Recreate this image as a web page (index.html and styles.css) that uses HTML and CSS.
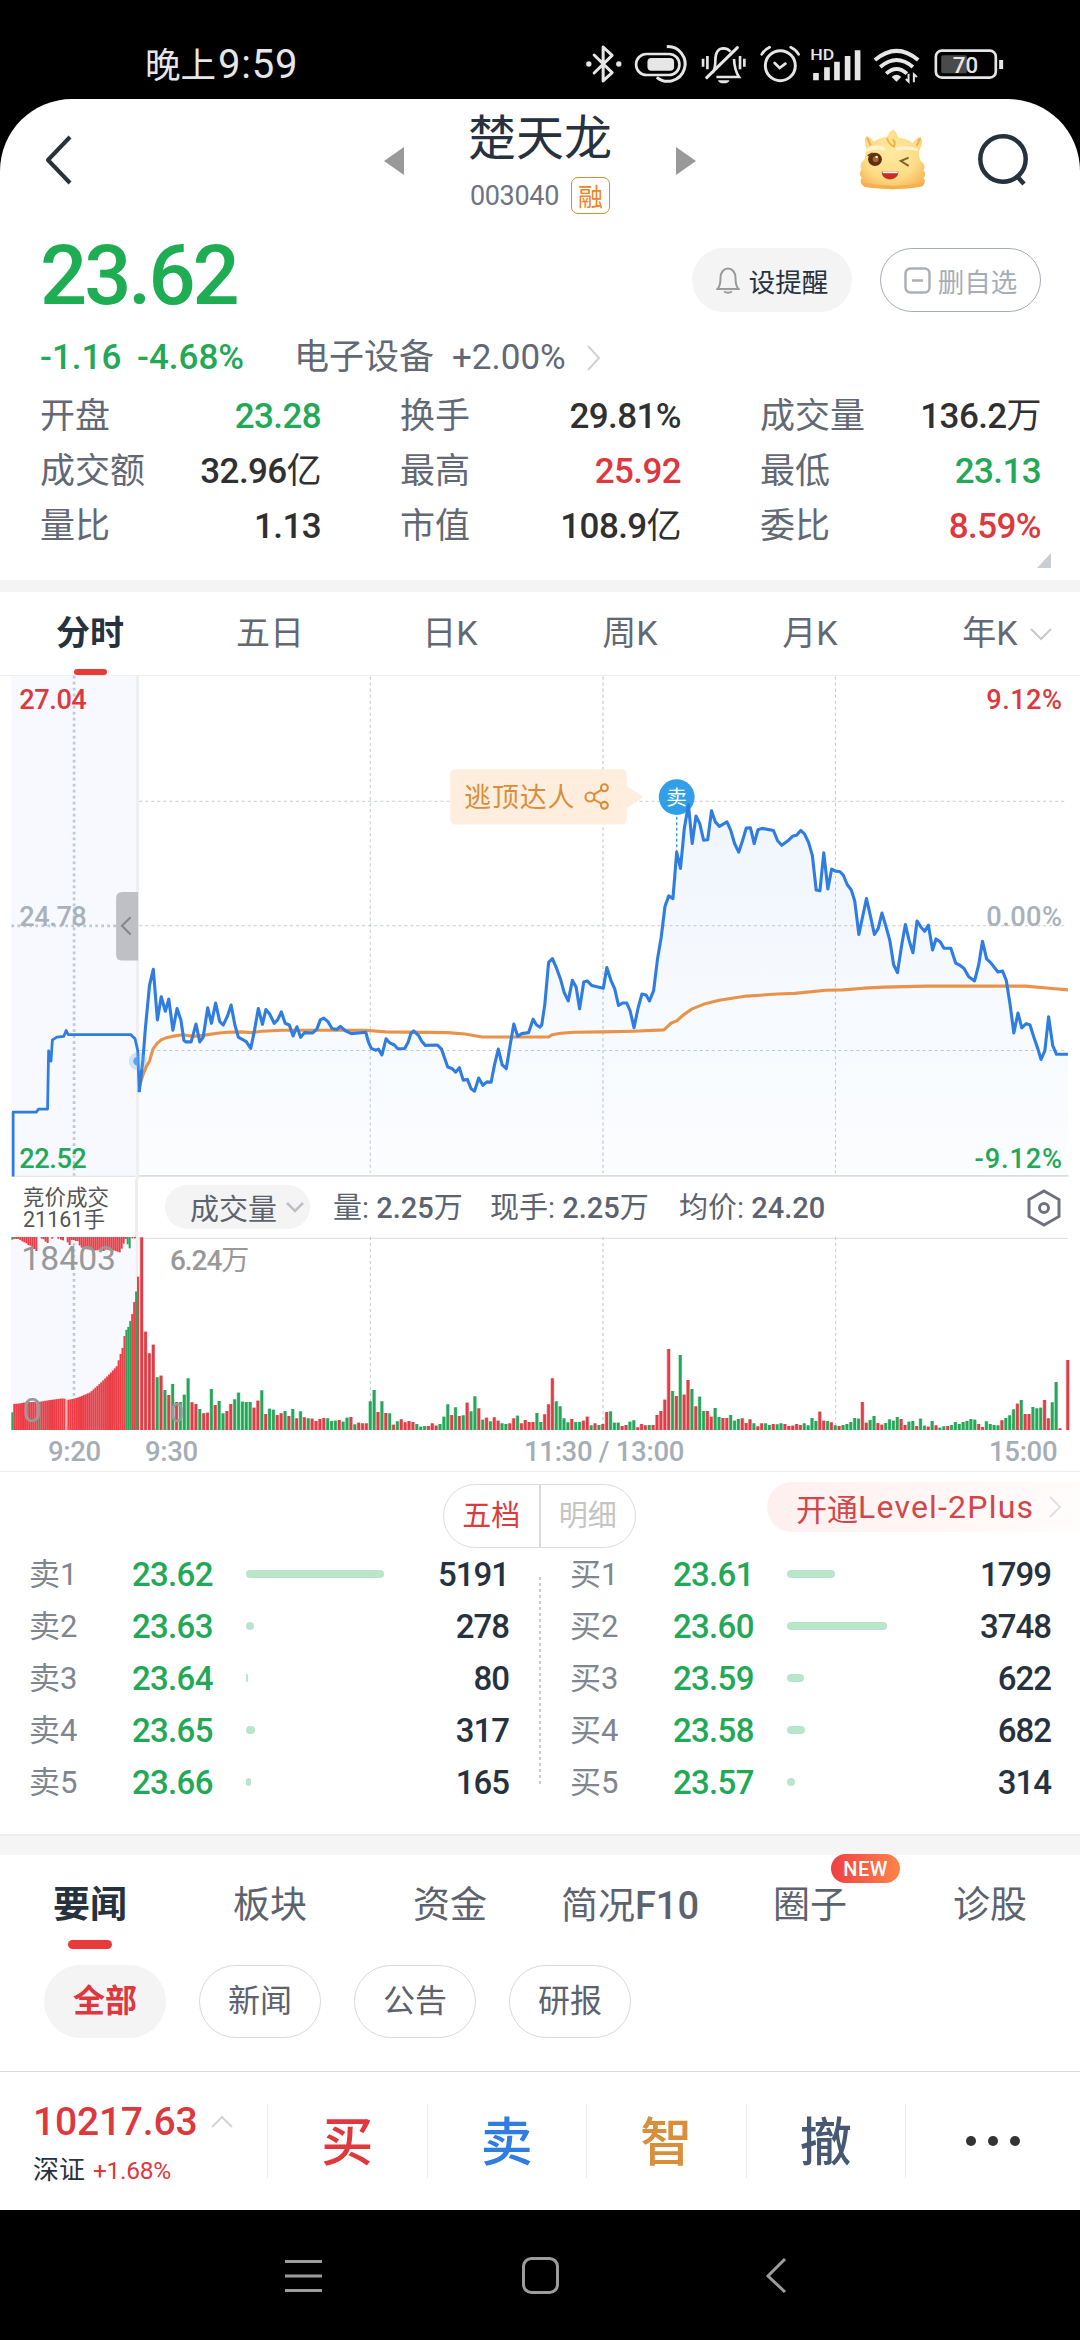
FILE: index.html
```html
<!DOCTYPE html>
<html lang="zh-CN">
<head>
<meta charset="utf-8">
<title>楚天龙 003040</title>
<link rel="stylesheet" href="styles.css">
</head>
<body>
<div class="status">
  <span class="clock">晚上<b>9:59</b></span>
  <svg class="status-icons" viewBox="70 65 1270 130" fill="none" stroke="#e6e6e6" stroke-width="8">
    <path d="M103 104L157 157L130 182V80L157 105L103 158" stroke-linejoin="round" stroke-linecap="round" stroke-width="9"/>
    <circle cx="87" cy="131" r="8" fill="#e6e6e6" stroke="none"/><circle cx="177" cy="131" r="8" fill="#e6e6e6" stroke="none"/>
    <rect x="229" y="101" width="130" height="63" rx="31"/><rect x="263" y="113" width="80" height="38" rx="12" fill="#e6e6e6" stroke="none"/>
    <path d="M321 79A52 52 0 1 1 291 171" stroke-width="9"/>
    <path d="M459 157C466 147 467 135 467 118C467 95 478 84 491 84C500 84 508 88 512 94M523 116C524 145 530 158 538 170H470"/>
    <path d="M441 172L533 82" stroke-width="9" stroke-linecap="round"/><path d="M475 180h34a17 9 0 0 1-34 0z" fill="#e6e6e6" stroke="none"/>
    <path d="M430 115v24M443 107v40M541 107v40M554 115v24"/>
    <circle cx="662" cy="136" r="45" stroke-width="9"/><path d="M645 128l15 15l17-13M606 102q8-14 24-21M717 102q-8-14-24-21" stroke-linecap="round"/>
    <text class="hd" x="752" y="119" textLength="72" lengthAdjust="spacingAndGlyphs">HD</text>
    <path d="M769 158v22M802 141v39M832 124v56M864 107v73M894 90v90" stroke-width="17"/>
    <path d="M946 119Q1011 64 1076 119M962 140Q1011 98 1060 140M980 160Q1011 132 1042 160" stroke-width="12"/>
    <path d="M1011 184l-15-14q15-13 29 0z" fill="#e6e6e6" stroke="none"/><path d="M1047 160v24l-8-8M1063 186v-24l9 8" stroke-width="6"/>
    <rect x="1129" y="91" width="180" height="81" rx="18"/><rect x="1145" y="105" width="77" height="54" rx="5" fill="#4a4a4a" stroke="none"/>
    <path d="M1325 119v27" stroke-width="12"/>
    <text class="batt" x="1180" y="158" textLength="76" lengthAdjust="spacingAndGlyphs">70</text>
  </svg>
</div>
<main class="app">
  <header class="head">
    <svg class="back" viewBox="0 0 28 50"><path d="M25 2L3 25L25 48"/></svg>
    <svg class="arrow left" viewBox="0 0 20 28"><path d="M20 0V28L0 14z"/></svg>
    <div class="title">
      <h1>楚天龙</h1>
      <p><span class="code">003040</span><b>融</b></p>
    </div>
    <svg class="arrow right" viewBox="0 0 20 28"><path d="M0 0V28L20 14z"/></svg>
    <svg class="dragon" viewBox="898 326 202 188">
      <defs>
        <radialGradient id="face" cx=".48" cy=".4" r=".65"><stop offset="0" stop-color="#ffeaa0"/><stop offset=".65" stop-color="#fddc86"/><stop offset="1" stop-color="#f6b75c"/></radialGradient>
      </defs>
      <path d="M919 385Q911 350 922 347Q936 354 942 364Q960 352 982 350Q990 330 1002 328Q1014 338 1017 352Q1045 355 1060 369Q1070 352 1084 350Q1094 368 1080 392Q1077 405 1084 422Q1102 436 1093 450Q1103 463 1093 474Q1103 486 1090 499Q1000 519 912 499Q896 489 906 473Q894 462 905 448Q897 434 914 418Q918 402 919 385Z" fill="url(#face)"/>
      <path d="M907 488Q1000 508 1095 488Q1095 499 1078 503Q1000 514 920 503Q906 499 907 488z" fill="#f9ad4b"/>
      <path d="M918 390Q928 370 970 378Q980 385 973 392Q945 383 921 396zM1012 383Q1044 372 1077 386L1075 393Q1044 386 1014 392Q1008 390 1012 383z" fill="#fff3cf"/>
      <path d="M982 354Q990 375 1004 379Q1009 362 999 358M922 352l11 24M1082 355l-10 22" fill="none" stroke="#efb04c" stroke-width="6"/>
      <ellipse cx="946" cy="418" rx="21" ry="20" fill="#5e2e13"/><circle cx="948" cy="418" r="9" fill="#a8642d"/><circle cx="951" cy="411" r="4" fill="#fff0c0"/>
      <path d="M924 407l15-8" stroke="#6b3b14" stroke-width="5"/>
      <path d="M1048 413L1024 423L1048 438" fill="none" stroke="#80642b" stroke-width="6"/>
      <path d="M966 455H1017Q1016 478 991 479Q967 478 966 455z" fill="#cf2c20"/><path d="M969 455h46v5h-46z" fill="#fff"/>
      <ellipse cx="990" cy="437" rx="12" ry="6" fill="#ffe27a"/>
    </svg>
    <svg class="search" viewBox="0 0 50 54"><circle cx="25" cy="25" r="22.7"/><path d="M38 41L46 50"/></svg>
  </header>

  <section class="quote">
    <div class="price-row">
      <strong>23.62</strong>
      <button class="pill solid"><svg viewBox="0 0 24 27"><path d="M1.5 22H22.5Q19.500 19 19.500 11C19.500 5 16 1.500 12 1.500S4.500 5 4.500 11Q4.500 19 1.500 22zM8 24.500Q12 27 16 24.500"/></svg>设提醒</button>
      <button class="pill line"><svg viewBox="0 0 27 27"><rect x="1.500" y="1.500" width="24" height="24" rx="5"/><path d="M8 13.500h11"/></svg>删自选</button>
    </div>
    <div class="change-row">
      <span class="g c1">-1.16</span><span class="g c2">-4.68%</span><span class="c3">电子设备</span><span class="c4">+2.00%</span>
      <svg viewBox="0 0 14 26"><path d="M1 1L12 13L1 25"/></svg>
    </div>
    <dl class="stats">
      <div><dt>开盘</dt><dd class="g">23.28</dd></div><div><dt>换手</dt><dd>29.81%</dd></div><div><dt>成交量</dt><dd>136.2<i>万</i></dd></div>
      <div><dt>成交额</dt><dd>32.96<i>亿</i></dd></div><div><dt>最高</dt><dd class="r">25.92</dd></div><div><dt>最低</dt><dd class="g">23.13</dd></div>
      <div><dt>量比</dt><dd>1.13</dd></div><div><dt>市值</dt><dd>108.9<i>亿</i></dd></div><div><dt>委比</dt><dd class="r">8.59%</dd></div>
    </dl>
    <svg class="corner" viewBox="0 0 14 15"><path d="M14 0V15H0z"/></svg>
  </section>

  <nav class="periods">
    <a class="on">分时</a><a>五日</a><a>日K</a><a>周K</a><a>月K</a>
    <a>年K<svg viewBox="0 0 22 14"><path d="M1 2L11 12L21 2"/></svg></a>
  </nav>

  <svg class="price-chart" viewBox="0 43.56 3136 1463.600">
    <defs>
      <linearGradient id="area" x1="0" y1="0" x2="0" y2="1"><stop offset="0" stop-color="#2f7de1" stop-opacity=".07"/><stop offset="1" stop-color="#2f7de1" stop-opacity=".018"/></linearGradient>
    </defs>
    <rect x="33" y="46" width="366" height="1452" fill="#f7f9fe"/>
    <g fill="none" stroke="#c3ccd2" stroke-width="3" stroke-dasharray="9 8.500">
      <path d="M1075 48V1490M2426 48V1490M404 410H3095M404 772H3095M404 1134H3095"/>
      <path d="M1751 48V1490" stroke="#dbe0e8" stroke-width="6"/>
    </g>
    <path d="M215 46V1498M33 772H400" fill="none" stroke="#bccadb" stroke-width="8" stroke-dasharray="8 9.400"/>
    <path id="areaPath" fill="url(#area)"/>
    <path d="M33 1499H400" stroke="#dcdee1" stroke-width="3"/><path d="M404 1498H3103" stroke="#dadcdf" stroke-width="5"/>
    <path d="M399 46V1507" stroke="#efefef" stroke-width="9"/>
    <path d="M401 674H355Q337 674 337 692V855Q337 873 355 873H401z" fill="#bfc0c5"/>
    <path d="M379 747L354 772L379 797" fill="none" stroke="#85868a" stroke-width="6"/>
    <g class="axis">
      <text class="r" x="56" y="142" textLength="196">27.04</text><text x="56" y="772" textLength="196">24.78</text><text class="g" x="56" y="1475" textLength="196">22.52</text>
      <text class="r" x="2864" y="142" textLength="220">9.12%</text><text x="2864" y="772" textLength="220">0.00%</text><text class="g" x="2830" y="1475" textLength="254">-9.12%</text>
    </g>
    <path d="M1965 455V560" stroke="#309fe8" stroke-width="4" stroke-dasharray="9 7"/>
    <g fill="none" stroke-width="9" stroke-linejoin="round">
      <path id="avgLine" stroke="#e9924a"/>
      <path id="auctionLine" stroke="#2f7de1" stroke-width="8"/>
      <circle cx="1965" cy="398" r="52" fill="#309fe8" stroke="none"/>
      <path id="priceLine" stroke="#2f7de1"/>
    </g>
    <circle cx="400" cy="1165" r="26" fill="#6fb0ee" opacity=".3"/><path d="M400 1152a13 13 0 0 0 0 26z" fill="#5ba2e6"/>
    <path d="M1323 317H1804Q1820 317 1820 333V366L1868 398L1820 430V462Q1820 478 1804 478H1323Q1307 478 1307 462V333Q1307 317 1323 317z" fill="#ffeedd"/>
    <text class="tag" x="1348" y="427" textLength="320">逃顶达人</text>
    <g fill="none" stroke="#d98e3c" stroke-width="6"><circle cx="1713" cy="398" r="13"/><circle cx="1755" cy="371" r="10"/><circle cx="1755" cy="422" r="10"/><path d="M1724 391L1746 377M1724 405L1746 417"/></g>
    <text class="sell" x="1965" y="420" text-anchor="middle">卖</text>
  </svg>

  <div class="info">
    <div class="auction">竞价成交<br>21161手</div>
    <button>成交量<svg viewBox="0 0 18 11"><path d="M1 1L9 9L17 1"/></svg></button>
    <span class="i1">量: <b>2.25</b>万</span><span class="i2">现手: <b>2.25</b>万</span><span class="i3">均价: <b>24.20</b></span>
    <svg class="gear" viewBox="0 0 34 38"><path d="M17 2L32 10.500V27.500L17 36L2 27.500V10.500z"/><circle cx="17" cy="19" r="4.500"/></svg>
  </div>

  <svg class="volume" viewBox="0 0 3240 579">
    <rect x="33" y="0" width="378" height="579" fill="#f7f9fe"/>
    <path d="M411 4H3204" stroke="#d9dbdd" stroke-width="3"/>
    <path d="M1111 0V579M2507 0V579" stroke="#c3ccd2" stroke-width="3" stroke-dasharray="9 9"/>
    <path d="M1809 0V579" stroke="#dbe0e8" stroke-width="6" stroke-dasharray="9 9"/>
    <path d="M222 0V579" stroke="#bccadb" stroke-width="8" stroke-dasharray="8 10"/>
    <path d="M411 0V579" stroke="#eeeeee" stroke-width="8"/>
    <g id="bars"></g>
    <g fill="#999">
      <text x="64" y="99" font-size="102" textLength="284" lengthAdjust="spacingAndGlyphs">18403</text>
      <text x="68" y="554" font-size="102">0</text>
      <text x="510" y="99" font-size="84" textLength="238"><tspan font-weight="500">6.24</tspan>万</text>
      <text x="510" y="554" font-size="80" font-weight="500" textLength="42" lengthAdjust="spacingAndGlyphs">0</text>
    </g>
  </svg>
  <div class="times"><span>9:20</span><span>9:30</span><span>11:30 / 13:00</span><span>15:00</span></div>

  <section class="book">
    <div class="book-head">
      <div class="seg"><span class="on">五档</span><span>明细</span></div>
      <a class="level">开通<i>Level-2Plus</i><svg viewBox="0 0 13 22"><path d="M1 1L11 11L1 21"/></svg></a>
    </div>
    <div class="orders">
      <ol>
        <li><em>卖1</em><b>23.62</b><span><i style="width:138px"></i></span><strong>5191</strong></li>
        <li><em>卖2</em><b>23.63</b><span><i style="width:8px"></i></span><strong>278</strong></li>
        <li><em>卖3</em><b>23.64</b><span><i style="width:2px"></i></span><strong>80</strong></li>
        <li><em>卖4</em><b>23.65</b><span><i style="width:9px"></i></span><strong>317</strong></li>
        <li><em>卖5</em><b>23.66</b><span><i style="width:5px"></i></span><strong>165</strong></li>
      </ol>
      <svg class="divider" viewBox="0 0 2 208"><path d="M1 0V208"/></svg>
      <ol>
        <li><em>买1</em><b>23.61</b><span><i style="width:48px"></i></span><strong>1799</strong></li>
        <li><em>买2</em><b>23.60</b><span><i style="width:100px"></i></span><strong>3748</strong></li>
        <li><em>买3</em><b>23.59</b><span><i style="width:17px"></i></span><strong>622</strong></li>
        <li><em>买4</em><b>23.58</b><span><i style="width:18px"></i></span><strong>682</strong></li>
        <li><em>买5</em><b>23.57</b><span><i style="width:8px"></i></span><strong>314</strong></li>
      </ol>
    </div>
  </section>

  <nav class="news"><a class="on">要闻</a><a>板块</a><a>资金</a><a>简况<b>F10</b></a><a>圈子<i>NEW</i></a><a>诊股</a></nav>
  <div class="chips"><span class="on">全部</span><span>新闻</span><span>公告</span><span>研报</span></div>

  <footer class="trade">
    <div class="index">
      <p class="big">10217.63<svg viewBox="0 0 22 12"><path d="M1 11L11 1L21 11"/></svg></p>
      <p class="small">深证<b>+1.68%</b></p>
    </div>
    <a class="buy">买</a><a class="sale">卖</a><a class="smart">智</a><a class="cancel">撤</a><a class="more"><i></i><i></i><i></i></a>
  </footer>
</main>
<div class="sysnav">
  <svg viewBox="0 0 37 37"><path d="M0 4.500H37M0 19H37M0 33.500H37"/></svg>
  <svg viewBox="0 0 37 37"><rect x="1.500" y="1.500" width="34" height="34" rx="8"/></svg>
  <svg viewBox="0 0 37 37"><path d="M26 2L9 19L26 35"/></svg>
</div>
<script src="chart.js"></script>
</body>
</html>
```

FILE: styles.css
```css
* { box-sizing: border-box; margin: 0; padding: 0; }
body { width: 1080px; height: 2340px; background: #000; font-family: Roboto, "Noto Sans CJK SC", sans-serif; color: #26323e; overflow: hidden; }
svg { display: block; flex: none; }
i, em { font-style: normal; }
button { border: 0; font-family: inherit; }
.g { color: #22a856; fill: #22a856; }
.r { color: #dc383e; fill: #dc383e; }

.status { height: 99px; display: flex; padding: 41.700px 0 0 145px; color: #e6e6e6; }
.clock { width: 438.300px; font-size: 35.500px; font-weight: 400; line-height: 46px; }
.clock b { font-size: 40px; font-weight: 400; letter-spacing: .8px; margin-left: 2px; }
.status-icons { width: 423.300px; height: 43.300px; }
.status-icons text { fill: #e6e6e6; stroke: none; font-weight: 500; }
.hd { font-size: 46px; }
.batt { font-size: 66px; }

.app { height: 2111px; background: #fff; border-radius: 72px 72px 0 0; display: flex; flex-direction: column; }
.head { height: 136px; display: flex; align-items: flex-start; padding-left: 45px; }
.head > svg { fill: none; stroke: #26323e; }
.back { width: 28px; height: 50px; margin-top: 36px; stroke-width: 4; stroke-linejoin: round; }
.head > .arrow { width: 20px; height: 28px; margin-top: 48px; fill: #999; stroke: none; }
.left { margin-left: 311px; }
.title { width: 272px; display: flex; flex-direction: column; align-items: center; padding-top: 12px; }
.title h1 { font-size: 48px; font-weight: 400; line-height: 56px; }
.title p { display: flex; align-items: center; height: 37px; margin-top: 10px; color: #6f7482; }
.code { font-size: 27px; letter-spacing: -.3px; margin-right: 12px; }
.title b { width: 39px; height: 37px; border: 1.500px solid #d58b33; border-radius: 7px; color: #ee8425; font: 400 25px/34px "Noto Sans CJK SC"; text-align: center; }
.dragon { width: 67px; height: 62px; margin: 30px 0 0 163px; }
.head > .dragon { stroke: none; }
.search { width: 50px; height: 54px; margin: 35px 0 0 52px; stroke-width: 4.500; }

.quote { height: 357px; padding: 13px 39px 0 40px; border-bottom: 12px solid #f4f4f4; position: relative; }
.price-row { display: flex; height: 64px; align-items: center; }
.price-row strong { color: #1fad53; font-size: 83px; font-weight: 500; letter-spacing: -3px; line-height: 64px; margin: -8px auto 0 0; }
.pill { height: 64px; width: 160px; border-radius: 32px; background: #f4f4f4; display: flex; align-items: center; justify-content: center; font-size: 26.500px; color: #26323e; }
.pill svg { width: 24px; height: 27px; margin-right: 9px; fill: none; stroke: #9a9a9a; stroke-width: 2; }
.pill.line { width: 161px; margin-left: 28px; background: #fff; border: 1px solid #a6aeb6; color: #a5adb6; }
.pill.line svg { width: 27px; margin-right: 7px; stroke: #acb0b6; stroke-width: 2.500; }
.change-row { height: 92px; padding-top: 33px; display: flex; font-size: 35px; line-height: 26px; color: #626874; }
.change-row span { white-space: nowrap; }
.c1, .c2, .c4 { font-weight: 500; }
.c1 { width: 97px; } .c2 { width: 157px; } .c3 { width: 158px; } .c4 { width: 135px; font-weight: 400; }
.change-row svg { width: 14px; height: 26px; fill: none; stroke: #cfd2d6; stroke-width: 2; }
.stats { display: grid; grid-template-columns: repeat(3, 281px); column-gap: 79px; margin-top: -15px; }
.stats div { height: 55px; display: flex; justify-content: space-between; align-items: center; }
.stats dt { font-size: 35px; color: #626874; line-height: 40px; }
.stats dd { font-size: 35px; font-weight: 500; line-height: 40px; letter-spacing: -.6px; color: #303030; }
.stats dd i { font-weight: 400; }
.stats dd.g { color: #22a856; } .stats dd.r { color: #dc383e; }
.corner { position: absolute; right: 29px; bottom: 12px; width: 14px; height: 15px; fill: #c9ccd0; }

.periods { height: 84px; display: grid; grid-template-columns: repeat(6, 180px); border-bottom: 1px solid #eee; }
.periods a { display: flex; justify-content: center; align-items: center; height: 83px; font-size: 34px; line-height: 40px; color: #626874; position: relative; padding-bottom: 2px; }
.periods .on { color: #26323e; font-weight: 700; }
.periods .on::after, .news .on::after { content: ""; position: absolute; left: 74px; bottom: 0; width: 33px; height: 6px; border-radius: 3px; background: #e93a3a; }
.periods svg { position: absolute; left: 130px; top: 35px; width: 22px; height: 14px; fill: none; stroke: #c5c9cf; stroke-width: 2; }
.price-chart { width: 1080px; height: 504px; margin-top: -1px; }
.axis text { font-size: 79px; font-weight: 500; fill: #a9b1ba; }
.axis .r { fill: #dc383e; } .axis .g { fill: #22a856; }
.tag { font-size: 78px; fill: #d98e3c; }
.sell { font-size: 60px; fill: #fff; }

.info { height: 58px; display: flex; align-items: center; color: #5d636e; font-size: 29px; }
.auction { width: 138px; height: 58px; padding: 8px 0 0 23px; border-right: 3px solid #eee; font-size: 21.500px; line-height: 22px; color: #555; }
.info button { width: 145px; height: 44px; border-radius: 22px; margin-left: 27px; padding-left: 25px; background: #f4f4f4; font-size: 29px; color: #5d636e; display: flex; align-items: center; gap: 9px; margin-top: -2px; }
.info button svg { width: 18px; height: 11px; fill: none; stroke: #bfbfc3; stroke-width: 2.500; }
.info span { line-height: 40px; white-space: nowrap; margin-top: -1px; }
.info b { font-weight: 500; }
.i1 { width: 157px; margin-left: 23px; } .i2 { width: 189px; } .i3 { width: 348px; }
.gear { width: 34px; height: 38px; fill: none; stroke: #6c717b; stroke-width: 3; }
.volume { width: 1080px; height: 193px; }
.times { height: 42px; border-bottom: 1px solid #eee; display: flex; font-size: 27.500px; font-weight: 500; line-height: 43px; color: #a5adb6; padding-left: 48px; }
.times span:nth-child(1) { width: 97px; } .times span:nth-child(2) { width: 379px; } .times span:nth-child(3) { width: 465px; }
.times span { letter-spacing: -.3px; white-space: nowrap; }

.book { height: 364px; border-bottom: 2px solid #eee; flex: none; }
.book-head { height: 77px; display: flex; padding: 10px 0 0 443px; }
.seg { width: 193px; height: 64px; margin-top: 2px; border: 1.500px solid #dcdcdc; border-radius: 32px; display: flex; font-size: 29px; line-height: 62px; color: #c4c4c4; }
.seg span { flex: 1; text-align: center; }
.seg .on { color: #dc3b3e; border-right: 2px solid #dcdcdc; }
.level { width: 313px; height: 50px; margin-left: 131px; border-radius: 25px 0 0 25px; background: linear-gradient(90deg, #fff0f0, #fff7f6 60%, #fffdfc); padding-left: 29px; display: flex; align-items: center; font-size: 31px; color: #d0474a; white-space: nowrap; }
.level i { font-size: 32px; letter-spacing: 1.200px; width: 191px; }
.level svg { width: 13px; height: 22px; fill: none; stroke: #dfdfe8; stroke-width: 2; }
.orders { display: flex; }
.orders ol { width: 539px; list-style: none; }
.orders ol:last-child { width: 510px; }
.orders li { height: 52px; display: flex; align-items: center; padding-left: 29px; line-height: 40px; }
.orders em { width: 103px; font-size: 31px; color: #80868e; }
.orders b { width: 114px; font-size: 33px; font-weight: 500; color: #22a856; letter-spacing: -.7px; }
.orders li span { flex: 1; height: 8px; margin-top: -2px; }
.orders li i { display: block; height: 8px; border-radius: 4px; background: #b9e6cb; }
.orders strong { font-size: 33px; font-weight: 500; padding-right: 30px; letter-spacing: -1px; }
.orders ol:last-child strong { padding-right: 0; }
.divider { width: 2px; height: 208px; margin-top: 28px; fill: none; stroke: #999; stroke-width: 1; stroke-dasharray: 3 3; }

.news { height: 114px; flex: none; border-top: 19px solid #f5f5f5; display: grid; grid-template-columns: repeat(6, 180px); }
.news a { height: 95px; padding-top: 31px; text-align: center; font-size: 37px; line-height: 40px; color: #5d636e; position: relative; }
.news b { font-weight: 500; font-size: 38px; }
.news .on { font-weight: 700; color: #26323e; }
.news .on::after { left: 68px; bottom: 1px; width: 44px; height: 9px; border-radius: 4.500px; }
.news i { position: absolute; left: 111px; top: -1px; width: 69px; height: 29px; border-radius: 15px; background: linear-gradient(90deg, #ee3f45, #ff8449); color: #fff; font-size: 20px; line-height: 30px; font-weight: 500; letter-spacing: .5px; }
.chips { display: flex; gap: 33px; height: 122px; flex: none; padding: 15px 0 0 44px; border-bottom: 1.500px solid #dcdcde; }
.chips span { width: 122px; height: 73px; border: 1px solid #d5d9dc; border-radius: 37px; font-size: 32px; line-height: 71px; text-align: center; color: #5d636e; }
.chips .on { background: #f4f4f4; border-color: #f4f4f4; color: #dc383e; font-weight: 700; }
.trade { flex: 1; display: flex; align-items: center; }
.index { width: 267px; padding: 7px 0 0 33px; }
.big { display: flex; align-items: center; color: #dc383e; font-size: 39px; font-weight: 500; line-height: 46px; letter-spacing: -.2px; }
.big svg { width: 22px; height: 12px; margin-left: 14px; fill: none; stroke: #d2d4d8; stroke-width: 2; }
.small { display: flex; align-items: center; font-size: 26px; line-height: 40px; margin-top: 4px; }
.small b { color: #dc383e; font-size: 24.500px; font-weight: 400; margin-left: 8px; padding-top: 2px; letter-spacing: -.3px; }
.trade a { width: 159.500px; height: 74px; border-left: 1px solid #ececec; font-size: 52px; line-height: 79px; font-weight: 500; text-align: center; }
.buy { color: #e0383c; } .sale { color: #2f7de1; } .smart { color: #d98e3c; } .cancel { color: #465872; }
.trade .more { width: 175px; display: flex; justify-content: center; align-items: center; gap: 12px; }
.more i { width: 10px; height: 10px; border-radius: 5px; background: #333; }
.sysnav { height: 130px; display: flex; justify-content: center; align-items: center; gap: 200px; background: #000; }
.sysnav svg { width: 37px; height: 37px; fill: none; stroke: #9c9c9c; stroke-width: 3; }
```

FILE: chart.js
```js
const RED = '#d9404a', GREEN = '#2aa45b';
const byId = id => document.getElementById(id);

// Points are flat x,y lists; the afternoon half is stored relative to its own origin.
const HALF = 1568;
const shift = list => list.map((v, i) => i % 2 ? v : v + HALF);
const line = list => 'M' + list.join(' ');

const auction = [38,1500,38,1313,105,1313,112,1304,138,1304,141,1135,148,1165,152,1103,165,1095,185,1093,192,1076,198,1088,380,1088,392,1100,400,1135,404,1255];
const morning = [404,1255,415,1160,422,1070,434,945,445,898,457,1045,468,978,480,1020,490,985,502,1075,514,1012,525,1045,534,1105,540,1109,555,1109,569,1057,580,1109,590,1095,603,1010,614,1055,626,996,638,1050,648,1060,660,1035,671,1002,682,1060,692,1095,715,1108,728,1128,738,1080,750,1012,762,1058,772,1015,783,1028,796,1055,806,1045,817,1022,828,1055,840,1060,851,1092,862,1065,873,1096,884,1082,908,1083,920,1072,930,1045,940,1040,952,1050,964,1070,978,1073,988,1064,1005,1078,1020,1085,1062,1081,1070,1110,1078,1128,1090,1133,1099,1130,1109,1147,1121,1100,1132,1112,1145,1118,1155,1129,1175,1128,1185,1110,1193,1085,1201,1077,1215,1090,1225,1108,1235,1119,1270,1118,1282,1130,1300,1182,1312,1186,1323,1197,1334,1184,1345,1220,1357,1218,1368,1245,1378,1252,1390,1214,1402,1235,1414,1225,1426,1226,1436,1175,1447,1130,1458,1175,1470,1187,1481,1120,1492,1057,1503,1093,1515,1085,1535,1082,1548,1043,1558,1060,1568,1066];
const afternoon = [5,1060,14,1000,25,878,36,867,48,895,60,928,70,965,82,990,94,930,105,950,115,1013,127,935,137,932,150,945,184,953,194,893,206,930,217,955,228,1003,240,996,252,996,262,1020,273,1068,285,1010,296,970,308,973,318,990,330,960,341,870,352,805,363,715,374,685,386,693,397,558,408,605,419,490,431,420,442,533,453,453,464,475,475,523,487,522,498,438,509,470,521,483,543,470,554,495,565,533,577,558,588,525,599,488,611,487,622,533,633,493,645,489,678,495,690,525,702,538,720,525,733,512,745,509,757,495,768,505,780,530,791,568,802,668,813,670,824,560,836,665,847,607,858,613,870,614,881,625,892,652,904,668,914,700,926,797,937,745,948,693,960,745,971,797,982,780,993,735,1005,775,1016,815,1027,885,1038,908,1050,830,1061,768,1072,815,1083,850,1095,758,1106,775,1117,788,1128,770,1140,842,1150,810,1162,818,1173,837,1193,837,1207,880,1220,887,1231,895,1245,920,1262,932,1274,885,1285,817,1297,868,1308,878,1330,906,1343,903,1354,930,1365,1000,1376,1083,1388,1025,1399,1068,1412,1056,1423,1060,1434,1095,1446,1130,1455,1160,1466,1135,1477,1036,1489,1120,1500,1145,1533,1145];
const average = [404,1240,415,1205,425,1180,434,1165,444,1130,455,1115,468,1103,480,1098,500,1093,530,1088,560,1093,590,1090,630,1084,660,1081,700,1080,730,1082,760,1078,820,1075,1060,1075,1120,1080,1300,1082,1350,1086,1400,1095,1568,1095]
  .concat(shift([25,1095,35,1088,60,1084,100,1081,184,1080,270,1078,360,1074,380,1055,397,1048,415,1032,440,1014,480,998,520,988,600,976,690,970,740,968,830,959,880,958,940,953,1000,950,1120,947,1410,947,1480,953,1533,958]));
const price = morning.concat(shift(afternoon));

byId('auctionLine').setAttribute('d', line(auction));
byId('priceLine').setAttribute('d', line(price));
byId('avgLine').setAttribute('d', line(average));
byId('areaPath').setAttribute('d', line(price) + ' V1498 H404Z');

// One entry per minute: bar height and direction.
const minutes = `578r 295r 230r 256r 158g 163r 120g 105r 138g 84r 84g 106g 155g 83r 78r 63g 50r 52r 123g 75r 87g 50g 57r 78r 92g 112g 85g 84g 84g 67r 88r 119g 48r 64g 61g 45r 50r 57g 42r 63g 35r 56g 38r 35g 34r 27r 33r 36r 35g 27g 28g 30r 25g 37g 39r 17g 22r 20r 20r
86g 120g 54r 86g 51r 50g 16r 26g 32r 23r 27r 24r 18g 10g 12g 12r 20r 13r 18g 40g 77g 45r 68g 42r 44g 82r 56g 101g 65r 31g 37r 26g 38r 28r 20g 18g 20r 35r 43g 20r 30r 24r 24r 51g 24g 47r 77r 155r 86g 71g 35g 23g 33r 24g 24g 28r 40r 14g 20r 15g
18r 54r 56g 22g 22g 12r 15r 25g 29g 8r 18r 14r 15g 15r 45r 57r 91r 243r 117g 102r 225g 106r 150r 123g 71r 100g 57g 57r 40r 66g 39g 36r 36r 45g 28g 33g 35r 21r 32r 20g 11r 20r 20g 15g 18r 17g 20g 18r 12r 13r 18r 15r 20g 14g 36g 27g 55r 28r 27g 23r
14g 12r 15g 18g 24g 36g 34g 84r 22r 30g 42g 21r 16r 21g 32g 28g 39g 33r 15r 25g 27g 12r 34g 13g 10r 27g 14r 7g 11g 12r 15g 24g 18g 24g 27g 33g 31g 18r 9r 26g 18g 15g 14g 29r 36g 44g 62g 79r 90g 48r 48r 69g 65g 67g 90r 35r 83g 144g 5r 0r 210r`.trim().split(/\s+/);

const BASE = 579;
const rect = (x, y, w, h, fill, opacity = 1) => `<rect x="${x}" y="${y}" width="${w}" height="${h}" fill="${fill}" opacity="${opacity}"/>`;
let out = '';

// Call-auction profile.
const profile = [[40,78],[60,80],[75,83],[120,85],[150,90],[190,95],[202,90],[225,95],[240,100],[270,113],[300,140],[330,170],[350,192],[360,225],[368,250],[372,280],[378,300],[386,312],[392,335],[398,355],[402,387],[407,413],[412,442],[416,502]];
const at = x => {
  for (let i = 1; i < profile.length; i++) {
    const [x0, y0] = profile[i - 1], [x1, y1] = profile[i];
    if (x <= x1) return y0 + (y1 - y0) * (x - x0) / (x1 - x0);
  }
  return 502;
};
out += rect(34, BASE - 53, 6, 53, GREEN);
for (let x = 40; x < 416; x += 5.8) {
  const green = (x > 371 && x < 391) || (x > 401 && x < 407) || (x > 112 && x < 117);
  const h = at(x + 2);
  const faint = x > 193 && x < 199;
  out += rect(x, BASE - h, 5.8, h, faint ? '#fbb9bf' : green ? GREEN : '#ee3f47');
  if (!faint) out += rect(x, BASE - h, 1, h, '#b8313c', .35);
}
// Unmatched volume hanging from the top edge.
const unmatched = [[34,8,GREEN],[40,6],[46,6],[52,6],[58,9],[64,13],[70,16],[76,19],[82,24],[88,26],[94,32],[100,36],[106,42],[122,5],[128,7],[134,14],[140,18],[154,5],[172,5],[180,8],[186,10],[200,16],[206,24],[212,9],[218,9],[224,12],[230,12],[236,25],[242,32],[248,34],[254,36],[260,37],[266,38],[272,40],[278,42],[284,40],[290,40],[296,38],[302,40],[308,42],[314,38],[320,38],[326,40],[332,41],[338,40],[344,42],[350,44],[356,46],[362,35],[368,20],[374,6],[380,22,GREEN],[386,34,GREEN],[394,4],[402,4]];
unmatched.forEach(([x, h, c]) => { out += rect(x, 0, 6, h, c || '#e8404a'); });

minutes.forEach((m, i) => {
  const h = parseInt(m, 10), fill = m.endsWith('r') ? RED : GREEN, light = m.endsWith('r') ? '#ff8b92' : '#7fdca3';
  if (!h) return;
  const x = 425 + 11.625 * i;
  out += rect(x - 6, BASE - h, 11.6, h, light, .75) + rect(x - 4, BASE - h, 8, h, fill);
});
byId('bars').innerHTML = out;
```
